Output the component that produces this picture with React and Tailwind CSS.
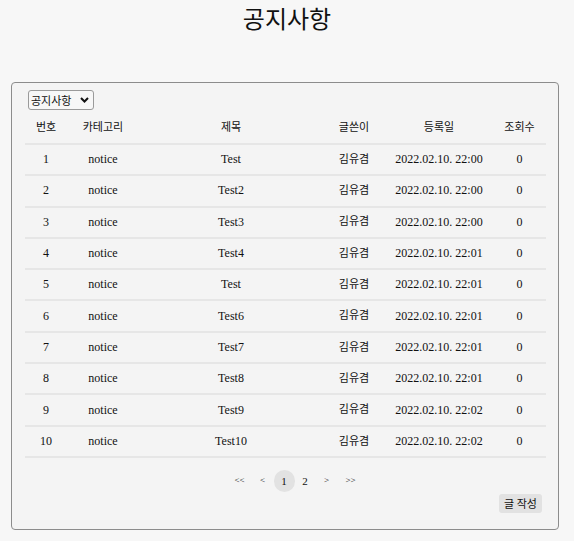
import { useState } from 'react';

const posts = [
  { id: 1, title: 'Test', date: '2022.02.10. 22:00' },
  { id: 2, title: 'Test2', date: '2022.02.10. 22:00' },
  { id: 3, title: 'Test3', date: '2022.02.10. 22:00' },
  { id: 4, title: 'Test4', date: '2022.02.10. 22:01' },
  { id: 5, title: 'Test', date: '2022.02.10. 22:01' },
  { id: 6, title: 'Test6', date: '2022.02.10. 22:01' },
  { id: 7, title: 'Test7', date: '2022.02.10. 22:01' },
  { id: 8, title: 'Test8', date: '2022.02.10. 22:01' },
  { id: 9, title: 'Test9', date: '2022.02.10. 22:02' },
  { id: 10, title: 'Test10', date: '2022.02.10. 22:02' },
];

const cols = 'grid grid-cols-[42px_72px_184px_62px_108px_53px] text-center';
const sans = 'font-["Noto_Sans_CJK_KR","Liberation_Sans",sans-serif]';

export default function App() {
  const [page, setPage] = useState(1);

  return (
    <div className={`min-h-[541px] bg-[#f7f7f7] text-[#111] ${sans}`}>
      <h1 className="text-center text-[24px] leading-[36px]">공지사항</h1>

      <div className="ml-[11px] mr-[15px] mt-[46px] h-[448px] rounded-[4px] border border-[#8c8c8c] bg-[#f4f4f4] pl-[13px] pr-[12px] pt-[7px] font-['Liberation_Serif','Noto_Sans_CJK_KR',serif] text-[12px]">
        {/* Category select */}
        <div className={`ml-[3px] flex h-[20px] w-[66px] items-center justify-between rounded-[3px] border border-[#9a9a9a] bg-[#f7f7f7] pl-[2px] pr-[4px] text-[11px] ${sans}`}>
          <span>공지사항</span>
          <svg width="9" height="6" viewBox="0 0 9 6">
            <path d="M1 1l3.5 3.5L8 1" fill="none" stroke="#111" strokeWidth="2" />
          </svg>
        </div>

        {/* Header */}
        <div className={`${cols} h-[35px] items-center border-b-2 border-[#e6e6e6] pt-[2px] text-[11px]`}>
          <span>번호</span>
          <span>카테고리</span>
          <span>제목</span>
          <span>글쓴이</span>
          <span>등록일</span>
          <span>조회수</span>
        </div>

        {/* Rows */}
        {posts.map(p => (
          <div key={p.id} className={`${cols} h-[31.3px] items-center border-b-2 border-[#e6e6e6] pb-[1px]`}>
            <span>{p.id}</span>
            <span>notice</span>
            <span>{p.title}</span>
            <span className="text-[11px]">김유겸</span>
            <span className="whitespace-pre">{p.date}</span>
            <span>0</span>
          </div>
        ))}

        {/* Pagination */}
        <div className="mt-[12px] flex h-[22px] items-center justify-center pl-[20px] text-[9px]">
          <span className="w-[24px] text-center">&lt;&lt;</span>
          <span className="w-[22px] text-center">&lt;</span>
          {[1, 2].map(n => (
            <button
              key={n}
              onClick={() => setPage(n)}
              className={`flex h-[22px] w-[21px] items-center justify-center rounded-full text-[11px] ${page === n ? 'bg-[#e2e2e2]' : ''}`}
            >
              {n}
            </button>
          ))}
          <span className="w-[22px] text-center">&gt;</span>
          <span className="w-[26px] text-center">&gt;&gt;</span>
        </div>

        <div className="mt-[2px] flex justify-end pr-[4px]">
          <button className={`h-[19px] w-[43px] rounded-[3px] bg-[#e2e2e2] text-[11px] leading-[19px] ${sans}`}>글 작성</button>
        </div>
      </div>
    </div>
  );
}
